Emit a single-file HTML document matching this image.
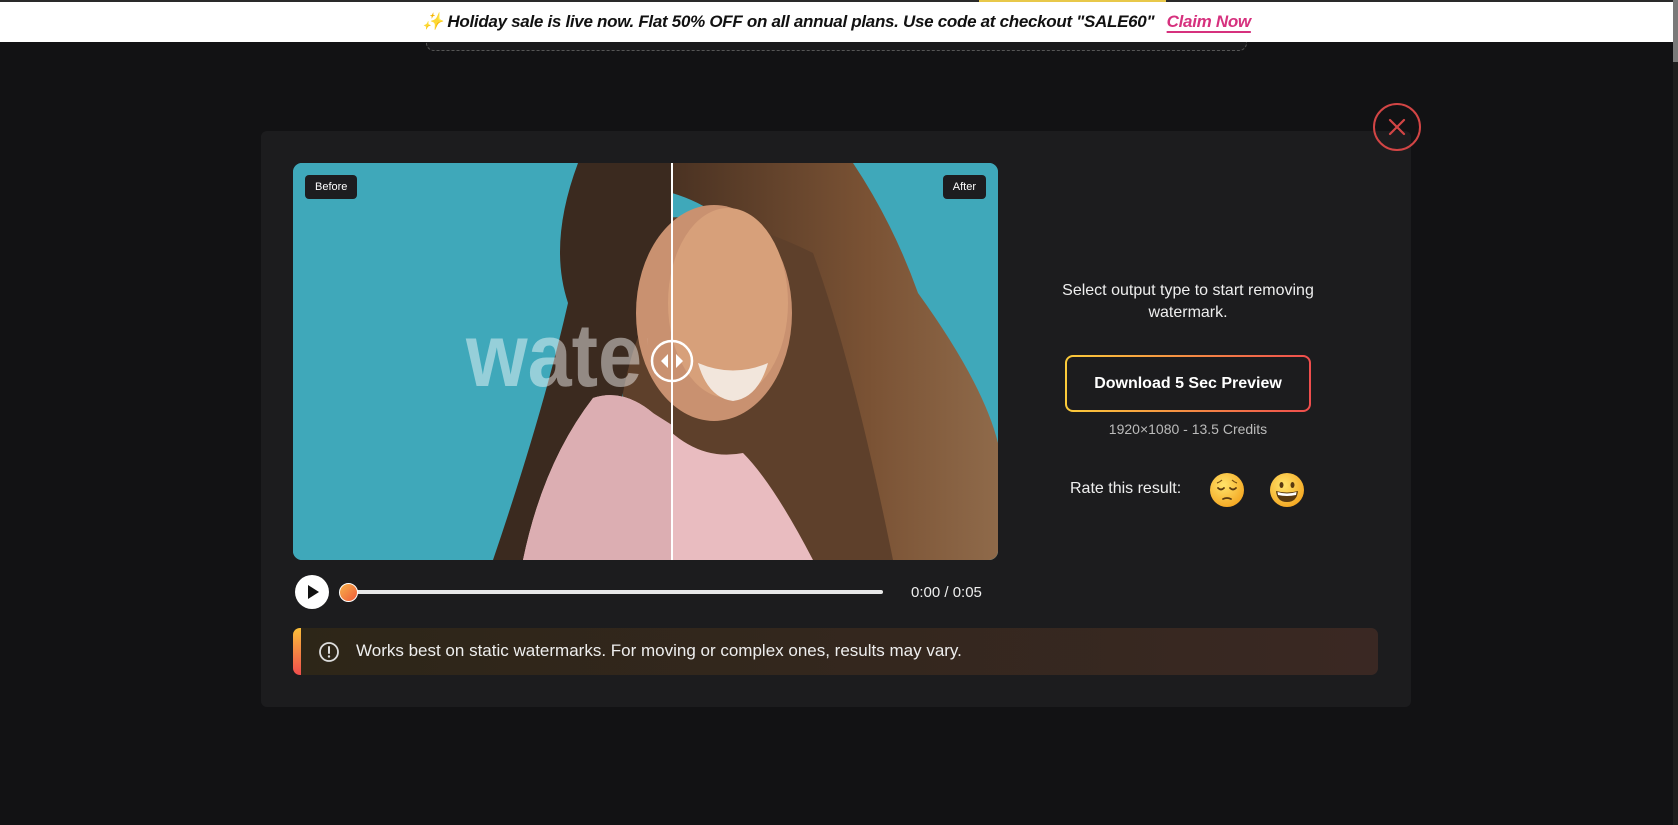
<!DOCTYPE html>
<html><head><meta charset="utf-8"><style>
*{margin:0;padding:0;box-sizing:border-box}
html,body{width:1678px;height:825px;overflow:hidden;background:#121214;font-family:"Liberation Sans","DejaVu Sans",sans-serif;color:#fff}
.banner{position:absolute;left:0;top:2px;width:1673px;height:40px;background:#fff;color:#111;font-style:italic;font-weight:bold;font-size:17px;text-align:center;line-height:40px;letter-spacing:-0.3px}
.topline{position:absolute;left:0;top:0;width:1673px;height:2px;background:#2a2a2a}
.yel{position:absolute;left:979px;top:0;width:187px;height:2px;background:#e8c84a}
.banner a{color:#d6317e;text-decoration:underline;text-decoration-thickness:2px;text-underline-offset:4px;margin-left:8px}
.dash{position:absolute;left:426px;top:30px;width:821px;height:21px;border:1px dashed #555;border-top:none;border-radius:0 0 8px 8px;background:#1a1a1c}
.sb{position:absolute;left:1673px;top:0;width:5px;height:825px;background:#1e1e1e}
.sb div{width:5px;height:62px;background:#7a7a7a}
.modal{position:absolute;left:261px;top:131px;width:1150px;height:576px;background:#1c1c1e;border-radius:6px}
.close{position:absolute;left:1373px;top:103px;width:48px;height:48px;border:2px solid #d24545;border-radius:50%}
.video{position:absolute;left:293px;top:163px;width:705px;height:397px;border-radius:9px;overflow:hidden;background:#3da6b8}
.lbl{position:absolute;top:12px;background:#1d1d20;color:#fff;font-size:11px;padding:0 10px;height:24px;line-height:24px;border-radius:4px}
.right{position:absolute;left:1040px;width:500px;text-align:center}
.play{position:absolute;left:295px;top:575px;width:34px;height:34px;border-radius:50%;background:#fff}
.track{position:absolute;left:349px;top:590px;width:534px;height:4px;background:#e8e8e8;border-radius:2px}
.knob{position:absolute;left:339px;top:583px;width:19px;height:19px;border-radius:50%;background:linear-gradient(135deg,#f7b24a,#ef5a3a);border:1px solid #fff}
.time{position:absolute;left:911px;top:584px;font-size:15px;color:#eee}
.notice{position:absolute;left:293px;top:628px;width:1085px;height:47px;border-radius:7px;background:linear-gradient(90deg,#2d2618,#3a2823);overflow:hidden}
.notice .bar{position:absolute;left:0;top:0;width:8px;height:47px;background:linear-gradient(#fbbf3a,#ef4d4d)}
.notice span{position:absolute;left:63px;top:13px;font-size:17px;color:#eee}
.btn{position:absolute;left:1065px;top:355px;width:246px;height:57px;border-radius:8px;padding:2px;background:linear-gradient(90deg,#fbcb3a,#ef4d4d)}
.btn div{width:100%;height:100%;background:#1c1c1e;border-radius:6px;text-align:center;line-height:53px;font-weight:bold;font-size:16px}
</style></head><body>
<div class="dash"></div>
<div class="topline"></div><div class="yel"></div>
<div class="banner">✨ Holiday sale is live now. Flat 50% OFF on all annual plans. Use code at checkout "SALE60" <a>Claim Now</a></div>
<div class="sb"><div></div></div>
<div class="modal"></div>
<div class="close"><svg width="44" height="44" viewBox="0 0 44 44"><path d="M15 15L29 29M29 15L15 29" stroke="#d24545" stroke-width="2.2" stroke-linecap="round"/></svg></div>
<div class="video">
<svg width="705" height="397" viewBox="0 0 705 397">
<defs>
<linearGradient id="hr" x1="0" x2="1"><stop offset="0" stop-color="#4a3222"/><stop offset="0.6" stop-color="#7a5234"/><stop offset="1" stop-color="#8f6a4a"/></linearGradient>
<clipPath id="cl"><rect x="0" y="0" width="379" height="397"/></clipPath>
</defs>
<rect width="705" height="397" fill="#3fa8ba"/>
<path d="M379 0 L560 0 Q600 60 625 130 Q690 220 705 280 L705 397 L570 397 Q520 300 500 200 Q480 60 379 30Z" fill="url(#hr)"/>
<path d="M330 60 Q420 40 520 90 Q560 200 600 397 L330 397Z" fill="#5e402b"/>
<path d="M285 0 Q255 80 275 140 Q250 250 200 397 L300 397 L330 230 Q345 150 379 120 L379 0Z" fill="#3b2a1f"/>
<ellipse cx="421" cy="150" rx="78" ry="108" fill="#c99170"/>
<ellipse cx="435" cy="140" rx="60" ry="95" fill="#d7a07a"/>
<path d="M405 200 Q440 215 475 200 Q465 235 440 238 Q415 235 405 200Z" fill="#f2e6dc"/>
<path d="M230 397 Q250 300 300 235 Q330 225 360 250 Q400 300 450 290 Q480 320 520 397Z" fill="#e9bcc0"/>
<path d="M230 397 Q250 300 300 235 Q330 225 360 250 L379 262 L379 397Z" fill="#dcaeb2"/>
<text x="173" y="223" clip-path="url(#cl)" font-family="Liberation Sans" font-weight="bold" font-size="90" fill="#fff" opacity="0.45" transform="translate(173 0) scale(0.88 1) translate(-173 0)">water</text>
<line x1="379" y1="0" x2="379" y2="397" stroke="#fff" stroke-width="2"/>
<circle cx="379" cy="198" r="20" fill="none" stroke="#fff" stroke-width="2.5"/>
<path d="M375 191L368 198L375 205Z M383 191L390 198L383 205Z" fill="#fff"/>
</svg>
<div class="lbl" style="left:12px">Before</div>
<div class="lbl" style="right:12px">After</div>
</div>
<div class="play"><svg width="34" height="34"><path d="M13 10L24 17L13 24Z" fill="#111"/></svg></div>
<div class="track"></div><div class="knob"></div>
<div class="time">0:00 / 0:05</div>
<div class="notice"><div class="bar"></div>
<svg style="position:absolute;left:25px;top:13px" width="22" height="22"><circle cx="11" cy="11" r="9" fill="none" stroke="#ddd" stroke-width="1.8"/><path d="M11 6V12" stroke="#ddd" stroke-width="2" stroke-linecap="round"/><circle cx="11" cy="15.5" r="1.2" fill="#ddd"/></svg>
<span>Works best on static watermarks. For moving or complex ones, results may vary.</span></div>
<div class="right" style="left:938px;top:280px;font-size:16px;line-height:22px;color:#eee">Select output type to start removing<br>watermark.</div>
<div class="btn"><div>Download 5 Sec Preview</div></div>
<div class="right" style="left:938px;top:421px;font-size:14px;color:#bbb">1920×1080 - 13.5 Credits</div>
<div style="position:absolute;left:1070px;top:480px;font-size:16px;color:#eee">Rate this result:</div>
<svg style="position:absolute;left:1209px;top:472px" width="36" height="36" viewBox="0 0 36 36"><defs><radialGradient id="e1" cx="0.4" cy="0.35" r="0.7"><stop offset="0" stop-color="#ffe36a"/><stop offset="1" stop-color="#f4a621"/></radialGradient></defs><circle cx="18" cy="18" r="17" fill="url(#e1)"/><path d="M9 16Q12 19 15 16M21 16Q24 19 27 16" stroke="#5a3a10" stroke-width="1.8" fill="none" stroke-linecap="round"/><path d="M14 27Q18 25 22 27" stroke="#5a3a10" stroke-width="1.8" fill="none" stroke-linecap="round"/><path d="M8 11Q11 10 13 8M23 8Q25 10 28 11" stroke="#7a5010" stroke-width="1.2" fill="none"/></svg>
<svg style="position:absolute;left:1269px;top:472px" width="36" height="36" viewBox="0 0 36 36"><circle cx="18" cy="18" r="17" fill="url(#e1)"/><ellipse cx="12.5" cy="13" rx="2" ry="3" fill="#5a3a10"/><ellipse cx="23.5" cy="13" rx="2" ry="3" fill="#5a3a10"/><path d="M7 19Q18 22 29 19Q28 30 18 30Q8 30 7 19Z" fill="#5a3a10"/><path d="M8.5 20Q18 23 27.5 20L27 23Q18 25 9 23Z" fill="#fff"/></svg>
</body></html>
